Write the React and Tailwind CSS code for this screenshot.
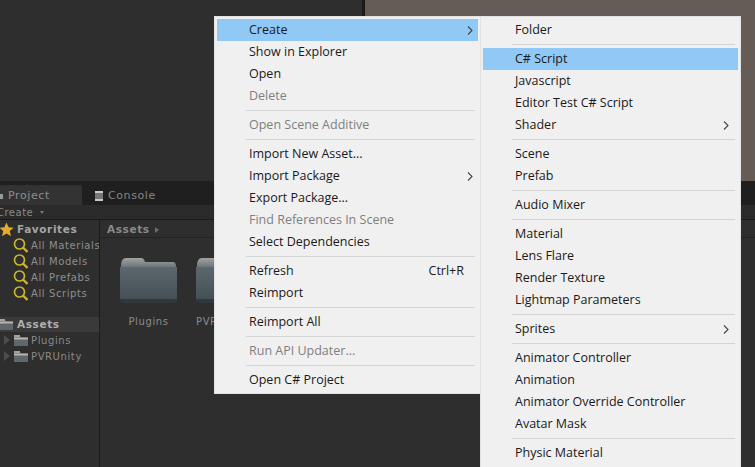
import React from 'react';

const mainMenu = [
  { label: 'Create', arrow: true, active: true },
  { label: 'Show in Explorer' },
  { label: 'Open' },
  { label: 'Delete', disabled: true },
  { sep: true },
  { label: 'Open Scene Additive', disabled: true },
  { sep: true },
  { label: 'Import New Asset...' },
  { label: 'Import Package', arrow: true },
  { label: 'Export Package...' },
  { label: 'Find References In Scene', disabled: true },
  { label: 'Select Dependencies' },
  { sep: true },
  { label: 'Refresh', shortcut: 'Ctrl+R' },
  { label: 'Reimport' },
  { sep: true },
  { label: 'Reimport All' },
  { sep: true },
  { label: 'Run API Updater...', disabled: true },
  { sep: true },
  { label: 'Open C# Project' },
];

const createMenu = [
  { label: 'Folder' },
  { sep: true },
  { label: 'C# Script', active: true },
  { label: 'Javascript' },
  { label: 'Editor Test C# Script' },
  { label: 'Shader', arrow: true },
  { sep: true },
  { label: 'Scene' },
  { label: 'Prefab' },
  { sep: true },
  { label: 'Audio Mixer' },
  { sep: true },
  { label: 'Material' },
  { label: 'Lens Flare' },
  { label: 'Render Texture' },
  { label: 'Lightmap Parameters' },
  { sep: true },
  { label: 'Sprites', arrow: true },
  { sep: true },
  { label: 'Animator Controller' },
  { label: 'Animation' },
  { label: 'Animator Override Controller' },
  { label: 'Avatar Mask' },
  { sep: true },
  { label: 'Physic Material' },
];

function Chevron({ className }) {
  return (
    <svg width="6" height="9" viewBox="0 0 6 9" className={`absolute top-[7px] ${className}`}>
      <path d="M1 0.5 L5 4.5 L1 8.5" fill="none" stroke="#444" strokeWidth="1.1" />
    </svg>
  );
}

function MenuItem({ item, arrowClass }) {
  if (item.sep) {
    return <div className="my-[3px] ml-[29px] mr-[3px] h-px bg-[#d4d4d4]" />;
  }
  return (
    <div
      className={`relative h-[22px] pl-[32px] text-[12.5px] leading-[21px] ${item.active ? 'bg-[#90c8f6]' : ''} ${item.disabled ? 'text-[#7f7f7f]' : 'text-[#1a1a1a]'}`}
    >
      {item.label}
      {item.shortcut && <span className="absolute right-[14px] top-0">{item.shortcut}</span>}
      {item.arrow && <Chevron className={arrowClass} />}
    </div>
  );
}

function Menu({ items, className, arrowClass }) {
  return (
    <div className={`absolute top-[16px] border border-[#e2e2e2] bg-[#f0f0f0] pt-[2px] pb-[2px] pl-[2px] pr-[2px] font-['Open_Sans','Noto_Sans',sans-serif] ${className}`}>
      {items.map((item, i) => (
        <MenuItem key={i} item={item} arrowClass={arrowClass} />
      ))}
    </div>
  );
}

function SearchIcon() {
  return (
    <svg width="15" height="15" viewBox="0 0 15 15" className="shrink-0">
      <circle cx="6.5" cy="6" r="5" fill="none" stroke="#cbb52e" strokeWidth="1.7" />
      <path d="M10 9.5 L14.5 14" stroke="#cbb52e" strokeWidth="2.4" />
    </svg>
  );
}

function StarIcon() {
  return (
    <svg width="15" height="15" viewBox="0 0 15 15" className="ml-[-1px] mr-[3px] shrink-0">
      <path d="M7.5 0.5 L9.6 5.2 L14.7 5.7 L10.8 9.1 L12 14.3 L7.5 11.6 L3 14.3 L4.2 9.1 L0.3 5.7 L5.4 5.2 Z" fill="#e3ac2d" />
    </svg>
  );
}

function SmallFolder({ className }) {
  return (
    <svg width="14" height="11" viewBox="0 0 14 11" className={className}>
      <path d="M0 1 H6 L7 2.5 H14 V11 H0 Z" fill="#5e676c" />
      <rect x="0" y="0" width="6" height="2" fill="#a3a3a3" />
      <rect x="0" y="2.5" width="14" height="2" fill="#b5b5b5" />
    </svg>
  );
}

function BigFolder({ clip }) {
  return (
    <svg width={clip ? 20 : 57} height="46" viewBox={clip ? '0 0 20 46' : '0 0 57 46'} className="shrink-0">
      <defs>
        <linearGradient id="folderBody" x1="0" y1="0" x2="0" y2="1">
          <stop offset="0" stopColor="#5c686e" />
          <stop offset="1" stopColor="#434e54" />
        </linearGradient>
        <linearGradient id="folderTab" x1="0" y1="0" x2="0" y2="1">
          <stop offset="0" stopColor="#a2a2a2" />
          <stop offset="1" stopColor="#6d767a" />
        </linearGradient>
      </defs>
      <path d="M1 9 Q1 1 6 1 H21 Q24 1 25 5 H53 Q56 5 56 10 H1 Z" fill="url(#folderTab)" />
      <path d="M0 10 H57 V41 Q57 45 53 45 H4 Q0 45 0 41 Z" fill="url(#folderBody)" />
      <path d="M0 42 H57 V43 Q57 46 53 46 H4 Q0 46 0 43 Z" fill="#30383c" />
    </svg>
  );
}

function Favorite({ label }) {
  return (
    <div className="flex h-[16px] items-center gap-[3px] pl-[13px] text-[#8f8f8f] whitespace-nowrap">
      <SearchIcon />
      {label}
    </div>
  );
}

function TreeFolder({ label }) {
  return (
    <div className="flex h-[16px] items-center pl-[4px] text-[#8a8a8a]">
      <span className="mr-[4px] h-0 w-0 border-y-[5px] border-l-[6px] border-y-transparent border-l-[#4d4d4d]" />
      <SmallFolder className="mr-[3px]" />
      {label}
    </div>
  );
}

export default function App() {
  return (
    <div className="relative flex h-[467px] w-[755px] flex-col overflow-hidden bg-[#2e2e2e] font-['DejaVu_Sans',sans-serif] text-[10px]">
      <div className="flex h-[181px] shrink-0">
        <div className="w-[362px] bg-[#2e2e2e]" />
        <div className="w-[3px] bg-[#1a1a1a]" />
        <div className="flex-1 bg-[#655c55]" />
      </div>

      <div className="flex h-[24px] shrink-0 items-end bg-[#1f1f1f] text-[11px] tracking-[0.6px]">
        <div className="flex h-[20px] w-[82px] items-center rounded-tr-[3px] bg-[#333333] pt-[2px] text-[#8c8c8c]">
          <span className="ml-[-1px] mr-[5px] h-[5px] w-[4px] bg-[#9a9a9a]" />
          Project
        </div>
        <div className="ml-[13px] flex h-[20px] items-center pt-[2px] text-[#858585]">
          <span className="mr-[5px] h-[10px] w-[8px] border-y-2 border-[#c9c9c9] bg-[#777777]" />
          Console
        </div>
      </div>

      <div className="flex h-[15px] shrink-0 items-center border-b border-[#1a1a1a] bg-[#2b2b2b] text-[10px] tracking-[0.5px] text-[#8a8a8a]">
        <span className="ml-[-3px]">Create</span>
        <span className="ml-[7px] h-0 w-0 border-x-[2px] border-t-[3px] border-x-transparent border-t-[#777777]" />
      </div>

      <div className="flex min-h-0 flex-1 tracking-[0.6px]">
        <div className="w-[100px] shrink-0 overflow-hidden border-r border-[#1c1c1c] pt-[2px]">
          <div className="flex h-[15px] items-center text-[10.5px] text-[#a5a5a5]">
            <StarIcon />
            <span className="font-bold">Favorites</span>
          </div>
          <Favorite label="All Materials" />
          <Favorite label="All Models" />
          <Favorite label="All Prefabs" />
          <Favorite label="All Scripts" />
          <div className="mt-[16px] flex h-[15px] items-center bg-[#3a3a3a] text-[10.5px] font-bold text-[#b0b0b0]">
            <SmallFolder className="ml-[-1px] mr-[4px]" />
            Assets
          </div>
          <TreeFolder label="Plugins" />
          <TreeFolder label="PVRUnity" />
        </div>

        <div className="min-w-0 flex-1">
          <div className="flex h-[18px] items-center border-b border-[#232323] pl-[7px] pt-[2px] text-[10.5px] font-bold text-[#8a8a8a]">
            Assets
            <span className="ml-[5px] h-0 w-0 border-y-[3px] border-l-[4px] border-y-transparent border-l-[#6d6d6d]" />
          </div>
          <div className="flex gap-[19px] pt-[19px] pl-[20px] text-[10px] tracking-[0.6px] text-[#8c8c8c]">
            <div className="flex w-[57px] flex-col items-center gap-[11px]">
              <BigFolder />
              Plugins
            </div>
            <div className="flex w-[20px] flex-col items-start gap-[11px]">
              <BigFolder clip />
              PVRUnity
            </div>
          </div>
        </div>
      </div>

      <Menu items={mainMenu} className="left-[214px] w-[267px]" arrowClass="right-[5px]" />
      <Menu items={createMenu} className="left-[480px] h-[470px] w-[261px]" arrowClass="right-[9px]" />
    </div>
  );
}
